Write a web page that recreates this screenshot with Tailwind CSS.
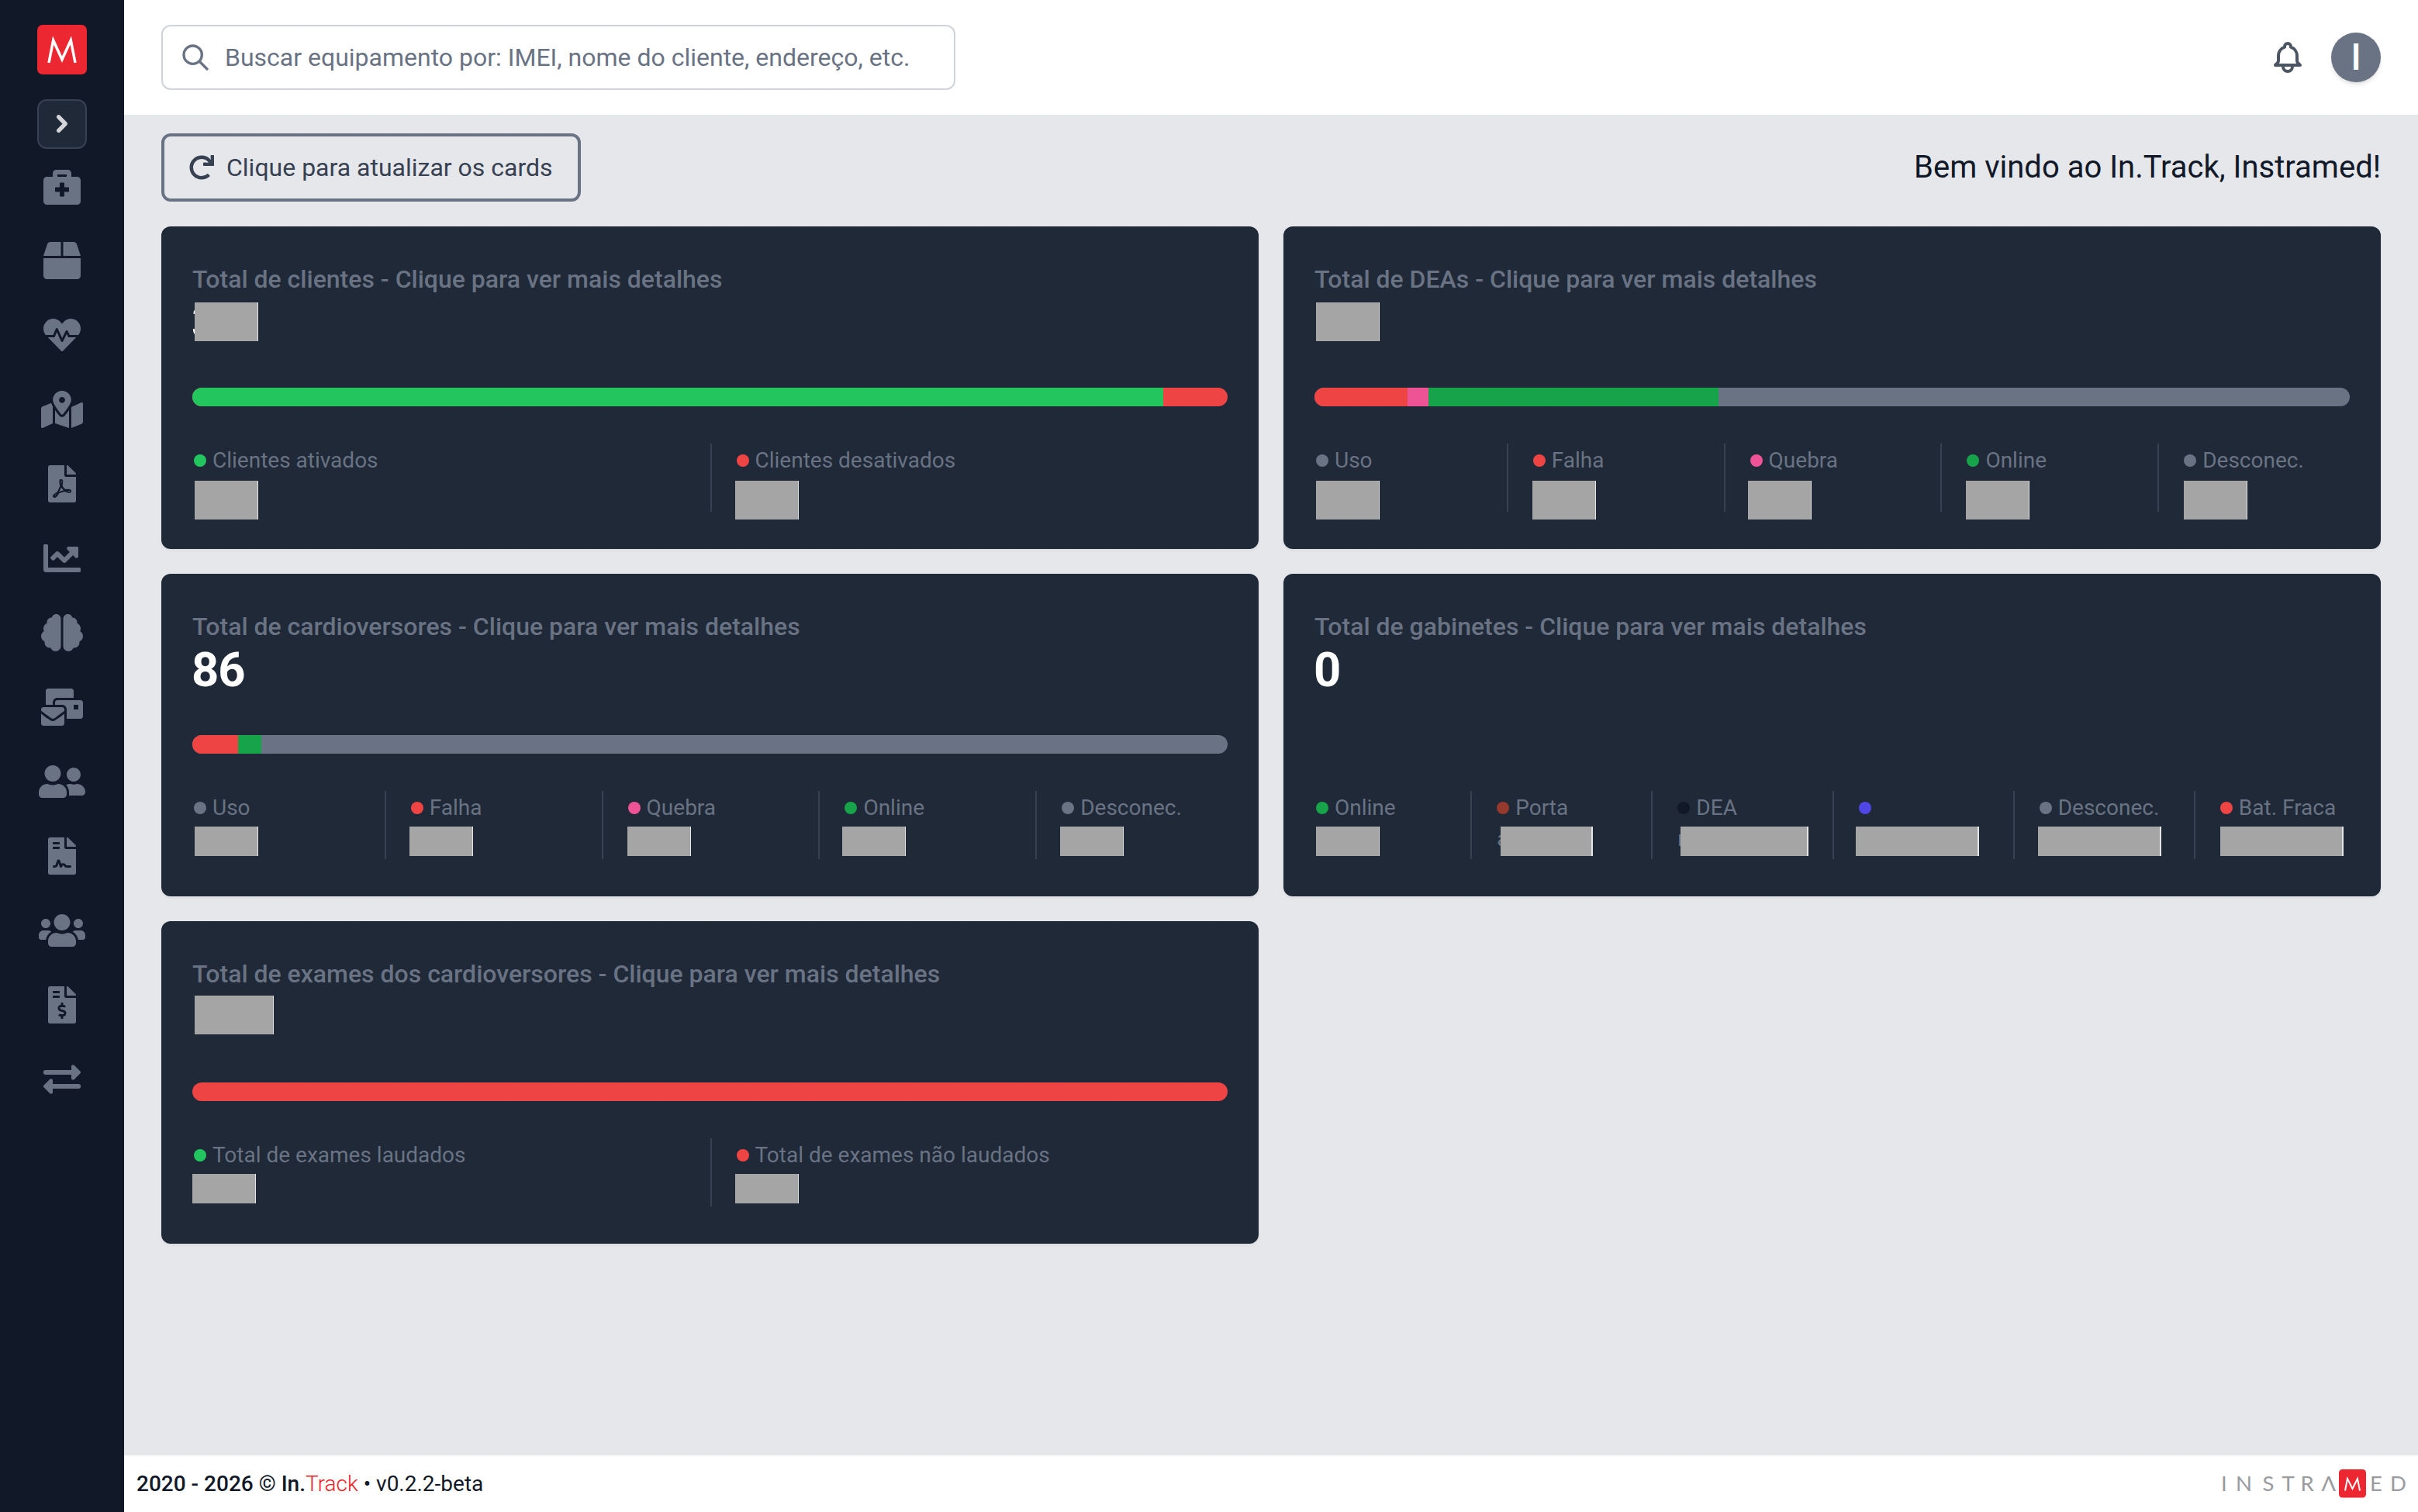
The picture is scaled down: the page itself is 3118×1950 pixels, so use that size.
<!DOCTYPE html>
<html lang="pt-BR">
<head>
<meta charset="utf-8">
<title>In.Track</title>
<script src="https://cdn.jsdelivr.net/npm/@tailwindcss/browser@4"></script>
</head>
<body class="flex h-[1950px] w-[3118px] overflow-hidden bg-[#e5e7eb] font-['Roboto',sans-serif] text-[#111827]">

<!-- Sidebar -->
<aside class="flex w-40 shrink-0 flex-col items-center bg-[#111827] pt-8 text-[#697384]">
  <svg class="size-16" viewBox="0 0 64 64"><rect width="64" height="64" rx="7" fill="#ed2731"/><polyline points="15,49 20.7,20 32,44.8 43.3,20 49,49" fill="none" stroke="#fff" stroke-width="3.5" stroke-miterlimit="10"/></svg>
  <button class="mt-8 flex size-16 items-center justify-center rounded-xl border-2 border-[#374151] bg-[#1f2937]">
    <svg class="size-10" viewBox="0 0 40 40" fill="none" stroke="#d4d5da" stroke-width="5.4" stroke-linecap="round" stroke-linejoin="round"><path d="M15.7 10.8l8.6 8.9-8.6 8.6"/></svg>
  </button>
  <nav class="flex flex-col">
    <a class="flex h-24 items-center justify-center"><svg class="h-12" viewBox="0 0 512 512" fill="currentColor" fill-rule="evenodd"><path d="M464 128h-80V80c0-26.500-21.500-48-48-48H176c-26.500 0-48 21.500-48 48v48H48c-26.500 0-48 21.500-48 48v288c0 26.500 21.500 48 48 48h416c26.500 0 48-21.500 48-48V176c0-26.500-21.500-48-48-48zM192 96h128v32H192zM352 328c0 4.400-3.600 8-8 8h-56v56c0 4.400-3.600 8-8 8h-48c-4.400 0-8-3.600-8-8v-56h-56c-4.400 0-8-3.600-8-8v-48c0-4.400 3.600-8 8-8h56v-56c0-4.400 3.600-8 8-8h48c4.400 0 8 3.600 8 8v56h56c4.400 0 8 3.600 8 8z"/></svg></a>
    <a class="flex h-24 items-center justify-center"><svg class="h-12" viewBox="0 0 512 512" fill="currentColor"><path d="M509.500 184.600L458.900 32.800C452.400 13.200 434.100 0 413.400 0H272v192h238.700c-.4-2.500-.4-5-1.200-7.400zM240 0H98.600c-20.700 0-39 13.200-45.500 32.800L2.500 184.600c-.8 2.400-.8 4.900-1.200 7.400H240V0zM0 224v240c0 26.500 21.500 48 48 48h416c26.500 0 48-21.500 48-48V224H0z"/></svg></a>
    <a class="flex h-24 items-center justify-center"><svg class="h-12" viewBox="0 0 512 512" fill="currentColor"><path d="M320.200 243.800l-49.700 99.400c-6 12.100-23.400 11.700-28.900-.6l-56.900-126.300-30 71.700H60.600l182.500 186.500c7.100 7.300 18.600 7.300 25.700 0L451.400 288H342.300l-22.100-44.200zM473.700 73.900l-2.400-2.500c-51.500-52.600-135.800-52.600-187.400 0L256 100l-27.900-28.500c-51.500-52.700-135.900-52.700-187.400 0l-2.400 2.400C-10.400 123.700-12.500 203 31 256h102.400l35.900-86.200c5.400-12.900 23.600-13.200 29.400-.4l58.200 129.300 49-97.900c5.900-11.800 22.700-11.800 28.600 0l27.600 55.200H481c43.500-53 41.400-132.300-7.300-182.100z"/></svg></a>
    <a class="flex h-24 items-center justify-center"><svg class="h-12" viewBox="0 0 576 512" fill="currentColor"><path d="M288 0c-69.590 0-126 56.410-126 126 0 56.260 82.350 158.800 113.900 196.020 6.390 7.540 17.820 7.540 24.200 0C331.650 284.800 414 182.260 414 126 414 56.410 357.590 0 288 0zm0 168c-23.200 0-42-18.800-42-42s18.800-42 42-42 42 18.800 42 42-18.800 42-42 42zM20.120 215.950A32.006 32.006 0 0 0 0 245.660v250.320c0 11.320 11.430 19.060 21.940 14.860L160 448V214.920c-8.840-15.980-16.070-31.540-21.250-46.420L20.120 215.950zM288 359.670c-14.070 0-27.380-6.180-36.510-16.960-19.660-23.200-40.570-49.620-59.490-76.720v182l192 64V266c-18.920 27.090-39.820 53.520-59.490 76.720-9.130 10.770-22.440 16.950-36.510 16.950zm266.060-198.510L416 224v288l139.880-55.950A31.996 31.996 0 0 0 576 426.340V176.020c0-11.320-11.430-19.060-21.940-14.860z"/></svg></a>
    <a class="flex h-24 items-center justify-center"><svg class="h-12" viewBox="0 0 384 512" fill="currentColor"><path d="M181.900 256.100c-5-16-4.900-46.900-2-46.900 8.400 0 7.600 36.900 2 46.900zm-1.700 47.200c-7.700 20.200-17.300 43.300-28.400 62.700 18.300-7 39-17.200 62.900-21.900-12.700-9.600-24.900-23.400-34.500-40.800zM86.100 428.100c0 .8 13.200-5.400 34.900-40.200-6.700 6.300-29.100 24.500-34.900 40.200zM248 160h136v328c0 13.300-10.700 24-24 24H24c-13.300 0-24-10.700-24-24V24C0 10.700 10.700 0 24 0h200v136c0 13.200 10.800 24 24 24zm-8 171.800c-20-12.200-33.300-29-42.700-53.800 4.500-18.500 11.600-46.600 6.200-64.200-4.700-29.400-42.400-26.500-47.800-6.800-5 18.300-.4 44.100 8.100 77-11.600 27.600-28.700 64.600-40.800 85.800-.1 0-.1.1-.2.1-27.100 13.900-73.600 44.500-54.500 68 5.600 6.900 16 10 21.500 10 17.900 0 35.700-18 61.100-61.800 25.800-8.500 54.100-19.100 79-23.200 21.700 11.800 47.100 19.500 64 19.500 29.200 0 31.200-32 19.700-43.400-13.900-13.600-54.300-9.700-73.600-7.200zM377 105L279 7c-4.500-4.500-10.600-7-17-7h-6v128h128v-6.100c0-6.300-2.500-12.400-7-16.900zm-74.100 255.300c4.100-2.700-2.500-11.900-42.800-9 37.100 15.800 42.800 9 42.800 9z"/></svg></a>
    <a class="flex h-24 items-center justify-center"><svg class="h-12" viewBox="0 0 512 512" fill="currentColor"><path d="M496 384H64V80c0-8.840-7.160-16-16-16H16C7.160 64 0 71.160 0 80v336c0 17.670 14.330 32 32 32h464c8.840 0 16-7.160 16-16v-32c0-8.840-7.160-16-16-16zM464 96H345.940c-21.380 0-32.090 25.850-16.970 40.970l32.400 32.400L288 242.750l-73.370-73.370c-12.500-12.500-32.760-12.500-45.250 0l-68.690 68.690c-6.250 6.250-6.250 16.380 0 22.630l22.620 22.620c6.250 6.250 16.380 6.250 22.630 0L192 237.250l73.370 73.370c12.500 12.500 32.760 12.500 45.250 0l96-96 32.400 32.400c15.120 15.120 40.970 4.410 40.970-16.970V112c.01-8.840-7.150-16-15.990-16z"/></svg></a>
    <a class="flex h-24 items-center justify-center"><svg class="h-12" viewBox="0 0 576 512" fill="currentColor"><path d="M208 0c-29.900 0-54.700 20.500-61.800 48.200-.8 0-1.400-.2-2.200-.2-35.300 0-64 28.700-64 64 0 4.800.6 9.500 1.700 14C52.500 138 32 166.600 32 200c0 12.600 3.200 24.300 8.300 34.900C16.300 248.700 0 274.300 0 304c0 33.300 20.400 61.900 49.400 73.900-.9 4.600-1.400 9.300-1.400 14.100 0 39.800 32.200 72 72 72 4.100 0 8.100-.5 12-1.200 9.600 28.500 36.200 49.200 68 49.200 39.800 0 72-32.200 72-72V64c0-35.300-28.700-64-64-64zm368 304c0-29.700-16.300-55.300-40.300-69.100 5.200-10.600 8.300-22.300 8.300-34.900 0-33.400-20.500-62-49.700-74 1-4.500 1.700-9.200 1.700-14 0-35.300-28.700-64-64-64-.8 0-1.500.2-2.200.2C422.700 20.500 397.900 0 368 0c-35.300 0-64 28.600-64 64v376c0 39.800 32.200 72 72 72 31.800 0 58.400-20.700 68-49.200 3.900.7 7.900 1.200 12 1.200 39.800 0 72-32.200 72-72 0-4.800-.5-9.500-1.400-14.100 29-12 49.400-40.600 49.400-73.900z"/></svg></a>
    <a class="flex h-24 items-center justify-center"><svg class="h-12" viewBox="0 0 576 512" fill="currentColor"><path d="M160 448c-25.600 0-51.200-22.400-64-32-64-44.800-83.200-60.800-96-70.400V480c0 17.670 14.330 32 32 32h256c17.670 0 32-14.330 32-32V345.600c-12.800 9.600-32 25.600-96 70.400-12.800 9.600-38.400 32-64 32zm128-192H32c-17.670 0-32 14.330-32 32v16c25.600 19.200 22.400 19.200 115.200 86.400 9.600 6.400 28.800 25.600 44.800 25.600s35.200-19.200 44.800-22.400c92.800-67.200 89.600-67.200 115.200-86.400V288c0-17.670-14.330-32-32-32zm256-96H224c-17.670 0-32 14.330-32 32v32h96c33.210 0 60.590 25.420 63.710 57.820l.29-.22V416h192c17.670 0 32-14.330 32-32V192c0-17.670-14.330-32-32-32zm-32 128h-64v-64h64v64zm-352-96c0-35.290 28.710-64 64-64h224V32c0-17.670-14.330-32-32-32H96C78.330 0 64 14.330 64 32v192h96v-32z"/></svg></a>
    <a class="flex h-24 items-center justify-center"><svg class="h-12" viewBox="0 0 640 512" fill="currentColor"><path d="M192 256c61.900 0 112-50.100 112-112S253.900 32 192 32 80 82.100 80 144s50.100 112 112 112zm76.800 32h-8.300c-20.800 10-43.900 16-68.500 16s-47.600-6-68.500-16h-8.300C51.600 288 0 339.600 0 403.200V432c0 26.500 21.500 48 48 48h288c26.500 0 48-21.500 48-48v-28.800c0-63.600-51.600-115.200-115.200-115.200zM480 256c53 0 96-43 96-96s-43-96-96-96-96 43-96 96 43 96 96 96zm48 32h-3.800c-13.900 4.800-28.600 8-44.200 8s-30.300-3.200-44.200-8H432c-20.400 0-39.200 5.900-55.700 15.400 24.400 26.300 39.700 61.200 39.700 99.800v38.400c0 2.200-.5 4.300-.6 6.400H592c26.500 0 48-21.500 48-48 0-61.900-50.100-112-112-112z"/></svg></a>
    <a class="flex h-24 items-center justify-center"><svg class="h-12" viewBox="0 0 384 512" fill="currentColor"><path d="M224 136V0H24C10.700 0 0 10.700 0 24v464c0 13.300 10.700 24 24 24h336c13.300 0 24-10.700 24-24V160H248c-13.200 0-24-10.800-24-24zM64 72c0-4.420 3.580-8 8-8h80c4.420 0 8 3.580 8 8v16c0 4.420-3.580 8-8 8H72c-4.420 0-8-3.580-8-8V72zm0 64c0-4.420 3.580-8 8-8h80c4.420 0 8 3.580 8 8v16c0 4.420-3.580 8-8 8H72c-4.420 0-8-3.580-8-8v-16zm192.810 248H304c8.840 0 16 7.160 16 16s-7.160 16-16 16h-47.190c-16.450 0-31.270-9.140-38.640-23.860-2.950-5.920-8.090-6.520-10.170-6.520s-7.220.59-10.020 6.190l-7.670 15.340a15.986 15.986 0 0 1-14.310 8.840c-.38 0-.75-.02-1.140-.05-6.450-.45-12-4.750-14.030-10.890L144 354.590l-10.610 31.880c-5.890 17.660-22.380 29.530-41 29.530H80c-8.840 0-16-7.160-16-16s7.160-16 16-16h12.390c4.830 0 9.110-3.080 10.640-7.660l18.190-54.640c3.300-9.810 12.440-16.410 22.780-16.410s19.480 6.590 22.770 16.410l13.880 41.640c19.770-16.190 54.050-9.700 66 14.160 2.020 4.060 5.960 6.500 10.160 6.500zM377 105L279.100 7c-4.500-4.500-10.600-7-17-7H256v128h128v-6.100c0-6.300-2.500-12.400-7-16.900z"/></svg></a>
    <a class="flex h-24 items-center justify-center"><svg class="h-12" viewBox="0 0 640 512" fill="currentColor"><path d="M96 224c35.300 0 64-28.700 64-64s-28.700-64-64-64-64 28.700-64 64 28.700 64 64 64zm448 0c35.300 0 64-28.700 64-64s-28.700-64-64-64-64 28.700-64 64 28.700 64 64 64zm32 32h-64c-17.600 0-33.500 7.100-45.100 18.600 40.300 22.100 68.900 62 75.100 109.400h66c17.700 0 32-14.300 32-32v-32c0-35.300-28.700-64-64-64zm-256 0c61.900 0 112-50.100 112-112S381.900 32 320 32 208 82.100 208 144s50.100 112 112 112zm76.800 32h-8.300c-20.800 10-43.900 16-68.500 16s-47.600-6-68.500-16h-8.300C179.600 288 128 339.600 128 403.200V432c0 26.500 21.500 48 48 48h288c26.500 0 48-21.500 48-48v-28.800c0-63.600-51.600-115.200-115.200-115.200zm-223.700-13.400C161.500 263.100 145.600 256 128 256H64c-35.300 0-64 28.700-64 64v32c0 17.700 14.300 32 32 32h65.900c6.300-47.400 34.900-87.300 75.200-109.400z"/></svg></a>
    <a class="flex h-24 items-center justify-center"><svg class="h-12" viewBox="0 0 384 512" fill="currentColor"><path d="M377 105L279.100 7c-4.500-4.500-10.600-7-17-7H256v128h128v-6.100c0-6.300-2.500-12.400-7-16.900zm-153 31V0H24C10.700 0 0 10.700 0 24v464c0 13.300 10.700 24 24 24h336c13.300 0 24-10.700 24-24V160H248c-13.200 0-24-10.800-24-24zM64 72c0-4.420 3.580-8 8-8h80c4.420 0 8 3.580 8 8v16c0 4.420-3.580 8-8 8H72c-4.420 0-8-3.580-8-8V72zm0 80v-16c0-4.420 3.580-8 8-8h80c4.420 0 8 3.580 8 8v16c0 4.420-3.580 8-8 8H72c-4.420 0-8-3.580-8-8zm144 263.880V440c0 4.420-3.580 8-8 8h-16c-4.420 0-8-3.580-8-8v-24.290c-11.290-.58-22.270-4.520-31.370-11.350-3.900-2.930-4.100-8.770-.57-12.140l11.750-11.210c2.770-2.640 6.890-2.760 10.130-.73 3.870 2.420 8.260 3.720 12.820 3.720h28.110c6.500 0 11.800-5.920 11.800-13.190 0-5.950-3.610-11.190-8.770-12.730l-45-13.500c-18.590-5.580-31.580-23.420-31.580-43.390 0-24.520 19.050-44.440 42.670-45.070V232c0-4.420 3.580-8 8-8h16c4.420 0 8 3.580 8 8v24.290c11.290.58 22.270 4.510 31.370 11.350 3.900 2.930 4.100 8.770.57 12.140l-11.750 11.210c-2.770 2.640-6.890 2.760-10.130.73-3.870-2.430-8.260-3.720-12.820-3.720h-28.110c-6.500 0-11.800 5.920-11.800 13.190 0 5.950 3.610 11.190 8.770 12.730l45 13.500c18.590 5.580 31.580 23.420 31.580 43.390 0 24.530-19.050 44.440-42.670 45.070z"/></svg></a>
    <a class="flex h-24 items-center justify-center"><svg class="h-12" viewBox="0 0 512 512" fill="currentColor"><path d="M0 168v-16c0-13.255 10.745-24 24-24h360V80c0-21.367 25.899-32.042 40.971-16.971l80 80c9.372 9.373 9.372 24.569 0 33.941l-80 80C409.956 271.982 384 261.456 384 240v-48H24c-13.255 0-24-10.745-24-24zm488 152H128v-48c0-21.314-25.862-32.080-40.971-16.971l-80 80c-9.372 9.373-9.372 24.569 0 33.941l80 80C102.057 463.997 128 453.437 128 432v-48h360c13.255 0 24-10.745 24-24v-16c0-13.255-10.745-24-24-24z"/></svg></a>
  </nav>
</aside>

<div class="flex min-w-0 flex-1 flex-col">
  <!-- Top bar -->
  <header class="flex h-[148px] shrink-0 items-center bg-white px-12">
    <div class="flex h-[84px] w-[1024px] items-center gap-[18px] rounded-xl border-2 border-[#d1d3db] pl-[22px] text-[32px] text-[#697384]">
      <svg class="size-10" viewBox="0 0 24 24" fill="none" stroke="currentColor" stroke-width="2" stroke-linecap="round" stroke-linejoin="round"><path d="M21 21l-6-6m2-5a7 7 0 11-14 0 7 7 0 0114 0z"/></svg>
      <span>Buscar equipamento por: IMEI, nome do cliente, endereço, etc.</span>
    </div>
    <svg class="ml-auto size-12 text-[#4b5563]" viewBox="0 0 24 24" fill="none" stroke="currentColor" stroke-width="2" stroke-linecap="round" stroke-linejoin="round"><path d="M15 17h5l-1.405-1.405A2.032 2.032 0 0118 14.158V11a6.002 6.002 0 00-4-5.659V5a2 2 0 10-4 0v.341C7.670 6.165 6 8.388 6 11v3.159c0 .538-.214 1.055-.595 1.436L4 17h5m6 0v1a3 3 0 11-6 0v-1m6 0H9"/></svg>
    <div class="ml-8 flex size-16 items-center justify-center rounded-full bg-[#697384] text-[48px] leading-none font-medium text-white shadow-md">I</div>
  </header>

  <main class="flex flex-1 flex-col px-12 pt-6">
    <div class="flex h-22 items-center justify-between">
      <button class="flex h-22 w-[541px] items-center gap-4 rounded-xl border-4 border-[#697384] pl-8 text-[32px] text-[#374151]">
        <svg class="size-8" viewBox="0 0 512 512" fill="currentColor"><path d="M500.330 0h-47.410a12 12 0 0 0-12 12.570l4 82.760A247.420 247.420 0 0 0 256 8C119.340 8 7.900 119.530 8 256.190 8.100 393.070 119.100 504 256 504a247.100 247.100 0 0 0 166.180-63.910 12 12 0 0 0 .48-17.430l-34-34a12 12 0 0 0-16.380-.55A176 176 0 1 1 402.100 157.800l-101.530-4.870a12 12 0 0 0-12.570 12v47.410a12 12 0 0 0 12 12h200.330a12 12 0 0 0 12-12V12a12 12 0 0 0-12-12z"/></svg>
        Clique para atualizar os cards
      </button>
      <h1 class="text-[40px] leading-none">Bem vindo ao In.Track, Instramed!</h1>
    </div>

    <div class="mt-8 grid grid-cols-2 gap-8 text-[28px] leading-10 text-[#697384]">

      <!-- Clientes -->
      <section class="flex h-[416px] flex-col rounded-xl bg-[#1f2937] px-10 pt-11 shadow-[0_2px_4px_rgb(0_0_0/0.05)]">
        <h2 class="text-[32px] leading-12 font-medium">Total de clientes - Clique para ver mais detalhes</h2>
        <div class="relative h-16 text-[60px] leading-16 font-bold text-white"><span class="-ml-px">3</span><i class="absolute top-1.5 left-[3px] h-[50px] w-[82px] border-r border-[#e5e5e5] bg-[#a5a5a5]"></i></div>
        <div class="mt-[52px] flex h-6 overflow-hidden rounded-full bg-[#ef4444]"><div class="bg-[#22c55e]" style="width:93.8%"></div></div>
        <div class="mt-12 flex h-22">
          <div class="flex-1 border-l-2 border-transparent pr-8"><div class="flex h-10 items-center gap-2 pt-1"><b class="size-4 rounded-full bg-[#22c55e]"></b>Clientes ativados</div><div class="mt-2 ml-px h-[50px] w-[82px] border-r border-[#e5e5e5] bg-[#a5a5a5]"></div></div>
          <div class="flex-1 border-l-2 border-[#374151] pl-8"><div class="flex h-10 items-center gap-2 pt-1"><b class="size-4 rounded-full bg-[#ef4444]"></b>Clientes desativados</div><div class="mt-2 -ml-0.5 h-[50px] w-[82px] border-r border-[#e5e5e5] bg-[#a5a5a5]"></div></div>
        </div>
      </section>

      <!-- DEAs -->
      <section class="flex h-[416px] flex-col rounded-xl bg-[#1f2937] px-10 pt-11 shadow-[0_2px_4px_rgb(0_0_0/0.05)]">
        <h2 class="text-[32px] leading-12 font-medium">Total de DEAs - Clique para ver mais detalhes</h2>
        <div class="h-16 pt-1.5 pl-0.5"><div class="h-[50px] w-[82px] border-r border-[#e5e5e5] bg-[#a5a5a5]"></div></div>
        <div class="mt-[52px] flex h-6 overflow-hidden rounded-full bg-[#697384]"><div class="bg-[#ef4444]" style="width:9%"></div><div class="bg-[#ee5396]" style="width:2%"></div><div class="bg-[#16a34a]" style="width:28.05%"></div></div>
        <div class="mt-12 flex h-22">
          <div class="flex-1 border-l-2 border-transparent pr-8"><div class="flex h-10 items-center gap-2 pt-1"><b class="size-4 rounded-full bg-[#697384]"></b>Uso</div><div class="mt-2 h-[50px] w-[82px] border-r border-[#e5e5e5] bg-[#a5a5a5]"></div></div>
          <div class="flex-1 border-l-2 border-[#374151] px-8"><div class="flex h-10 items-center gap-2 pt-1"><b class="size-4 rounded-full bg-[#ef4444]"></b>Falha</div><div class="mt-2 -ml-px h-[50px] w-[82px] border-r border-[#e5e5e5] bg-[#a5a5a5]"></div></div>
          <div class="flex-1 border-l-2 border-[#374151] px-8"><div class="flex h-10 items-center gap-2 pt-1"><b class="size-4 rounded-full bg-[#ee5396]"></b>Quebra</div><div class="mt-2 -ml-[3px] h-[50px] w-[82px] border-r border-[#e5e5e5] bg-[#a5a5a5]"></div></div>
          <div class="flex-1 border-l-2 border-[#374151] px-8"><div class="flex h-10 items-center gap-2 pt-1"><b class="size-4 rounded-full bg-[#16a34a]"></b>Online</div><div class="mt-2 -ml-px h-[50px] w-[82px] border-r border-[#e5e5e5] bg-[#a5a5a5]"></div></div>
          <div class="flex-1 border-l-2 border-[#374151] pl-8"><div class="flex h-10 items-center gap-2 pt-1"><b class="size-4 rounded-full bg-[#697384]"></b>Desconec.</div><div class="mt-2 h-[50px] w-[82px] border-r border-[#e5e5e5] bg-[#a5a5a5]"></div></div>
        </div>
      </section>

      <!-- Cardioversores -->
      <section class="flex h-[416px] flex-col rounded-xl bg-[#1f2937] px-10 pt-11 shadow-[0_2px_4px_rgb(0_0_0/0.05)]">
        <h2 class="text-[32px] leading-12 font-medium">Total de cardioversores - Clique para ver mais detalhes</h2>
        <div class="h-16 text-[61.5px] leading-16 font-bold tracking-[-1px] text-white"><span class="-ml-px">86</span></div>
        <div class="mt-[52px] flex h-6 overflow-hidden rounded-full bg-[#697384]"><div class="bg-[#ef4444]" style="width:4.4%"></div><div class="bg-[#16a34a]" style="width:2.25%"></div></div>
        <div class="mt-12 flex h-22">
          <div class="flex-1 border-l-2 border-transparent pr-8"><div class="flex h-10 items-center gap-2 pt-1"><b class="size-4 rounded-full bg-[#697384]"></b>Uso</div><div class="mt-1.5 ml-px h-[38px] w-[82px] border-r border-[#e5e5e5] bg-[#a5a5a5]"></div></div>
          <div class="flex-1 border-l-2 border-[#374151] px-8"><div class="flex h-10 items-center gap-2 pt-1"><b class="size-4 rounded-full bg-[#ef4444]"></b>Falha</div><div class="mt-1.5 -ml-0.5 h-[38px] w-[82px] border-r border-[#e5e5e5] bg-[#a5a5a5]"></div></div>
          <div class="flex-1 border-l-2 border-[#374151] px-8"><div class="flex h-10 items-center gap-2 pt-1"><b class="size-4 rounded-full bg-[#ee5396]"></b>Quebra</div><div class="mt-1.5 -ml-px h-[38px] w-[82px] border-r border-[#e5e5e5] bg-[#a5a5a5]"></div></div>
          <div class="flex-1 border-l-2 border-[#374151] px-8"><div class="flex h-10 items-center gap-2 pt-1"><b class="size-4 rounded-full bg-[#16a34a]"></b>Online</div><div class="mt-1.5 -ml-[3px] h-[38px] w-[82px] border-r border-[#e5e5e5] bg-[#a5a5a5]"></div></div>
          <div class="flex-1 border-l-2 border-[#374151] pl-8"><div class="flex h-10 items-center gap-2 pt-1"><b class="size-4 rounded-full bg-[#697384]"></b>Desconec.</div><div class="mt-1.5 -ml-0.5 h-[38px] w-[82px] border-r border-[#e5e5e5] bg-[#a5a5a5]"></div></div>
        </div>
      </section>

      <!-- Gabinetes -->
      <section class="flex h-[416px] flex-col rounded-xl bg-[#1f2937] px-10 pt-11 shadow-[0_2px_4px_rgb(0_0_0/0.05)]">
        <h2 class="text-[32px] leading-12 font-medium">Total de gabinetes - Clique para ver mais detalhes</h2>
        <div class="h-16 text-[61.5px] leading-16 font-bold text-white"><span class="-ml-px">0</span></div>
        <div class="mt-[124px] flex h-22">
          <div class="flex-1 border-l-2 border-transparent pr-8"><div class="flex h-10 items-center gap-2 pt-1"><b class="size-4 rounded-full bg-[#16a34a]"></b>Online</div><div class="mt-1.5 h-[38px] w-[82px] border-r border-[#e5e5e5] bg-[#a5a5a5]"></div></div>
          <div class="flex-1 border-l-2 border-[#374151] px-8"><div class="flex h-10 items-center gap-2 pt-1"><b class="size-4 rounded-full bg-[#953a2d]"></b>Porta</div><div class="relative h-10 pt-0.5">a<i class="absolute top-1.5 left-[5px] h-[38px] w-[119px] border-r-2 border-[#e5e5e5] bg-[#a5a5a5]"></i></div></div>
          <div class="flex-1 border-l-2 border-[#374151] px-8"><div class="flex h-10 items-center gap-2 pt-1"><b class="size-4 rounded-full bg-[#111827]"></b>DEA</div><div class="relative h-10 pt-0.5">r<i class="absolute top-1.5 left-[3.500px] h-[38px] w-[165px] border-r-2 border-[#e5e5e5] bg-[#a5a5a5]"></i></div></div>
          <div class="flex-1 border-l-2 border-[#374151] px-8"><div class="flex h-10 items-center pt-1"><b class="size-4 rounded-full bg-[#4f46e5]"></b></div><div class="mt-1.5 -ml-1 h-[38px] w-[159px] border-r-2 border-[#e5e5e5] bg-[#a5a5a5]"></div></div>
          <div class="flex-1 border-l-2 border-[#374151] px-8"><div class="flex h-10 items-center gap-2 pt-1"><b class="size-4 rounded-full bg-[#697384]"></b>Desconec.</div><div class="mt-1.5 -ml-0.5 h-[38px] w-[159px] border-r-2 border-[#e5e5e5] bg-[#a5a5a5]"></div></div>
          <div class="flex-1 border-l-2 border-[#374151] pl-8"><div class="flex h-10 items-center gap-2 pt-1"><b class="size-4 rounded-full bg-[#ef4444]"></b>Bat. Fraca</div><div class="mt-1.5 h-[38px] w-[159px] border-r-2 border-[#e5e5e5] bg-[#a5a5a5]"></div></div>
        </div>
      </section>

      <!-- Exames -->
      <section class="flex h-[416px] flex-col rounded-xl bg-[#1f2937] px-10 pt-11 shadow-[0_2px_4px_rgb(0_0_0/0.05)]">
        <h2 class="text-[32px] leading-12 font-medium">Total de exames dos cardioversores - Clique para ver mais detalhes</h2>
        <div class="h-16 pt-1 pl-[3px]"><div class="h-[50px] w-[102px] border-r border-[#e5e5e5] bg-[#a5a5a5]"></div></div>
        <div class="mt-[52px] h-6 rounded-full bg-[#ef4444]"></div>
        <div class="mt-12 flex h-22">
          <div class="flex-1 border-l-2 border-transparent pr-8"><div class="flex h-10 items-center gap-2 pt-1"><b class="size-4 rounded-full bg-[#22c55e]"></b>Total de exames laudados</div><div class="mt-1.5 -ml-0.5 h-[38px] w-[82px] border-r border-[#e5e5e5] bg-[#a5a5a5]"></div></div>
          <div class="flex-1 border-l-2 border-[#374151] pl-8"><div class="flex h-10 items-center gap-2 pt-1"><b class="size-4 rounded-full bg-[#ef4444]"></b>Total de exames não laudados</div><div class="mt-1.5 -ml-0.5 h-[38px] w-[82px] border-r border-[#e5e5e5] bg-[#a5a5a5]"></div></div>
        </div>
      </section>
    </div>
  </main>

  <footer class="flex h-[73px] shrink-0 items-center justify-between bg-white px-4 text-[28px]">
    <div><span class="font-medium">2020 - 2026 © In.</span><span class="font-light text-[#ed1c24]">Track</span> • v0.2.2-beta</div>
    <svg class="mb-0.5 h-10 w-[242px]" viewBox="0 0 242 40" font-family="Lato, sans-serif" font-size="27.500" fill="#999b9e">
      <text y="30" x="4 23 57.500 82.500 106.500 133.500">INSTRΛ</text>
      <rect x="156" y="2" width="35" height="36.500" rx="4.500" fill="#ed2731"/>
      <polyline points="164,29.500 167,14 173.500,27 180,14 183,29.500" fill="none" stroke="#fff" stroke-width="2" stroke-miterlimit="10"/>
      <text y="30" x="196 222">ED</text>
    </svg>
  </footer>
</div>
</body>
</html>
